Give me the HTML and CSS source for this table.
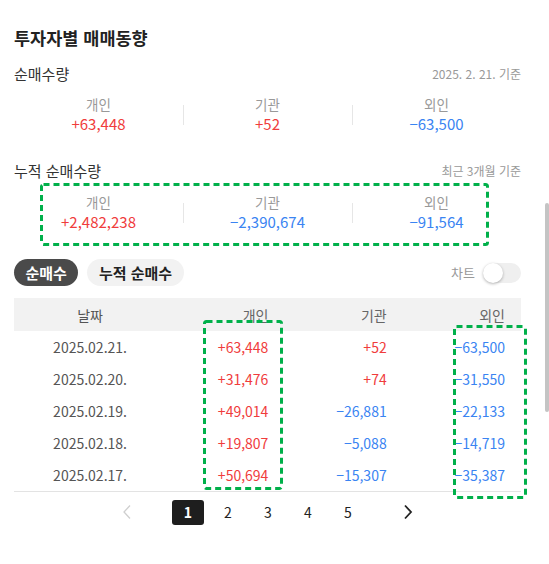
FILE: index.html
```html
<!DOCTYPE html>
<html lang="ko">
<head>
<meta charset="utf-8">
<title>투자자별 매매동향</title>
<link rel="stylesheet" href="styles.css">
</head>
<body>
<div class="page">
  <h1 class="title">투자자별 매매동향</h1>

  <div class="sec-head">
    <h2 class="sec-title">순매수량</h2>
    <span class="sec-note">2025. 2. 21. 기준</span>
  </div>
  <div class="stats">
    <div class="stat"><span class="stat-label">개인</span><span class="stat-value up">+63,448</span></div>
    <div class="stat"><span class="stat-label">기관</span><span class="stat-value up">+52</span></div>
    <div class="stat"><span class="stat-label">외인</span><span class="stat-value down">−63,500</span></div>
  </div>

  <div class="sec-head second">
    <h2 class="sec-title">누적 순매수량</h2>
    <span class="sec-note">최근 3개월 기준</span>
  </div>
  <div class="stats second">
    <div class="stat"><span class="stat-label">개인</span><span class="stat-value up">+2,482,238</span></div>
    <div class="stat"><span class="stat-label">기관</span><span class="stat-value down">−2,390,674</span></div>
    <div class="stat"><span class="stat-label">외인</span><span class="stat-value down">−91,564</span></div>
  </div>

  <div class="tabs-row">
    <div class="tabs">
      <button class="pill active">순매수</button>
      <button class="pill">누적 순매수</button>
    </div>
    <div class="chart-toggle">
      <span>차트</span>
      <span class="switch"><span class="knob"></span></span>
    </div>
  </div>

  <table class="trade-table">
    <colgroup>
      <col class="c-date"><col class="c-num"><col class="c-num"><col class="c-num">
    </colgroup>
    <thead>
      <tr><th class="date">날짜</th><th class="num">개인</th><th class="num">기관</th><th class="num">외인</th></tr>
    </thead>
    <tbody>
      <tr><td class="date">2025.02.21.</td><td class="num up">+63,448</td><td class="num up">+52</td><td class="num down">−63,500</td></tr>
      <tr><td class="date">2025.02.20.</td><td class="num up">+31,476</td><td class="num up">+74</td><td class="num down">−31,550</td></tr>
      <tr><td class="date">2025.02.19.</td><td class="num up">+49,014</td><td class="num down">−26,881</td><td class="num down">−22,133</td></tr>
      <tr><td class="date">2025.02.18.</td><td class="num up">+19,807</td><td class="num down">−5,088</td><td class="num down">−14,719</td></tr>
      <tr><td class="date">2025.02.17.</td><td class="num up">+50,694</td><td class="num down">−15,307</td><td class="num down">−35,387</td></tr>
    </tbody>
  </table>

  <nav class="pager">
    <span class="pg-arrow prev">
      <svg width="10" height="16" viewBox="0 0 10 16"><path d="M8 1.5 L2 8 L8 14.5" fill="none" stroke="#cfcfcf" stroke-width="1.3"/></svg>
    </span>
    <span class="pg-num active">1</span>
    <span class="pg-num">2</span>
    <span class="pg-num">3</span>
    <span class="pg-num">4</span>
    <span class="pg-num">5</span>
    <span class="pg-arrow next">
      <svg width="10" height="16" viewBox="0 0 10 16"><path d="M2 1.5 L8 8 L2 14.5" fill="none" stroke="#222" stroke-width="1.8"/></svg>
    </span>
  </nav>
</div>

<div class="scrollbar"></div>

<svg class="mark mark-a" width="449" height="63" viewBox="0 0 449 63"><rect x="1.5" y="1.5" width="446" height="60" rx="2" class="mark-rect"/></svg>
<svg class="mark mark-b" width="80" height="170" viewBox="0 0 80 170"><rect x="1.5" y="1.5" width="77" height="167" rx="2" class="mark-rect"/></svg>
<svg class="mark mark-c" width="74" height="174" viewBox="0 0 74 174"><rect x="1.5" y="1.5" width="71" height="171" rx="2" class="mark-rect"/></svg>
</body>
</html>
```

FILE: styles.css
```css
* { box-sizing: border-box; }

body {
  margin: 0;
  background: #fff;
  color: #222;
  font-family: "Noto Sans CJK KR", "Noto Sans", sans-serif;
  position: relative;
  min-height: 564px;
  overflow: hidden;
}

.page {
  width: 549px;
  padding: 26px 28px 0 14px;
}

.title {
  margin: 0;
  font-size: 17.5px;
  font-weight: 700;
  line-height: 24px;
  color: #222;
}

.sec-head {
  display: flex;
  justify-content: space-between;
  align-items: center;
  height: 20px;
  margin-top: 13px;
}
.sec-head.second { margin-top: 26px; }

.sec-title {
  margin: 0;
  font-size: 15px;
  font-weight: 400;
  color: #333;
}

.sec-note {
  font-size: 12px;
  color: #999;
}

.stats {
  display: grid;
  grid-template-columns: repeat(3, 1fr);
  margin-top: 12px;
}
.stats.second { margin-top: 13px; }

.stat {
  position: relative;
  display: flex;
  flex-direction: column;
  align-items: center;
}
.stat + .stat::before {
  content: "";
  position: absolute;
  left: 0;
  top: 10px;
  width: 1px;
  height: 20px;
  background: #e6e6e6;
}

.stat-label {
  font-size: 13.5px;
  line-height: 19px;
  color: #999;
}
.stat-value {
  font-size: 15px;
  line-height: 20px;
}

.up { color: #f03c3c; }
.down { color: #3a84f2; }

.tabs-row {
  display: flex;
  justify-content: space-between;
  align-items: center;
  height: 27px;
  margin-top: 27px;
}

.tabs {
  display: flex;
  gap: 9px;
}

.pill {
  height: 27px;
  padding: 0 11.5px;
  border: 0;
  border-radius: 14px;
  background: #f2f2f2;
  color: #222;
  font-family: inherit;
  font-size: 15px;
  font-weight: 700;
  line-height: 27px;
}
.pill.active {
  background: #4a4a4a;
  color: #fff;
}

.chart-toggle {
  display: flex;
  align-items: center;
  gap: 8px;
  font-size: 13px;
  color: #999;
}

.switch {
  position: relative;
  width: 38px;
  height: 20px;
  border-radius: 10px;
  background: #efefef;
}
.knob {
  position: absolute;
  left: 0;
  top: 0;
  width: 20px;
  height: 20px;
  border-radius: 50%;
  background: #fff;
  box-shadow: 0 1px 3px rgba(0, 0, 0, 0.3);
}

.trade-table {
  width: 100%;
  margin-top: 12px;
  border-collapse: collapse;
  table-layout: fixed;
  font-size: 14px;
  border-bottom: 1px solid #e3e3e3;
}
.c-date { width: 30%; }
.c-num { width: 23.33%; }

.trade-table th {
  height: 33px;
  padding: 0;
  background: #f2f2f2;
  font-weight: 400;
  color: #666;
}
.trade-table td {
  height: 32px;
  padding: 0;
}
.trade-table .date {
  text-align: center;
  color: #555;
}
.trade-table .num {
  text-align: right;
  padding-right: 16px;
}

.pager {
  display: flex;
  justify-content: center;
  align-items: center;
  gap: 8px;
  height: 25px;
  margin-top: 8px;
}
.pg-arrow {
  display: flex;
  justify-content: center;
  align-items: center;
  width: 32px;
  height: 25px;
}
.pg-arrow.prev { margin-right: 21px; }
.pg-arrow.next { margin-left: 20px; }

.pg-num {
  width: 32px;
  height: 25px;
  display: flex;
  justify-content: center;
  align-items: center;
  font-size: 14px;
  color: #222;
  border-radius: 3px;
}
.pg-num.active {
  background: #1e1e1e;
  color: #fff;
  font-weight: 700;
}

.scrollbar {
  position: absolute;
  left: 545px;
  top: 203px;
  width: 4px;
  height: 209px;
  border-radius: 2px;
  background: #c4c4c4;
}

.mark {
  position: absolute;
  overflow: visible;
}
.mark-rect {
  fill: none;
  stroke: #00b04a;
  stroke-width: 3;
  stroke-dasharray: 6 4;
}
.mark-a { left: 40px; top: 183px; }
.mark-b { left: 203px; top: 320px; }
.mark-c { left: 453px; top: 325px; }
```
